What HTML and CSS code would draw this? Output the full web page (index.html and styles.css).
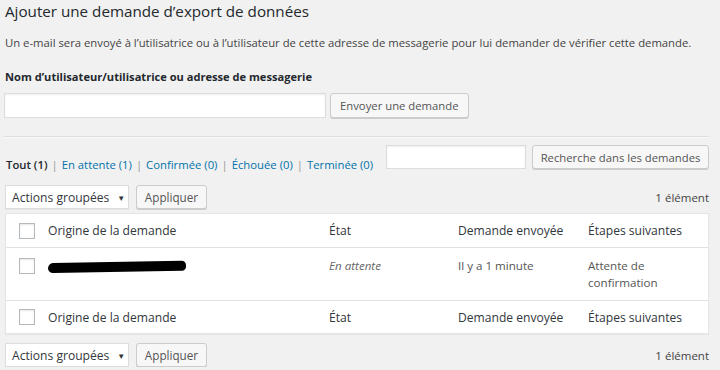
FILE: index.html
```html
<!DOCTYPE html>
<html lang="fr">
<head>
<meta charset="utf-8">
<title>Export</title>
<link rel="stylesheet" href="styles.css">
</head>
<body>
<div class="wrap">
  <h2 class="title">Ajouter une demande d’export de données</h2>
  <p class="intro">Un e-mail sera envoyé à l’utilisatrice ou à l’utilisateur de cette adresse de messagerie pour lui demander de vérifier cette demande.</p>
  <label class="lbl">Nom d’utilisateur/utilisatrice ou adresse de messagerie</label>
  <div class="formrow">
    <input class="txt main" type="text">
    <button class="btn">Envoyer une demande</button>
  </div>
  <hr class="sep">
  <div class="filters">
    <ul class="subsub">
      <li class="current">Tout <span class="count">(1)</span></li>
      <li class="bar">|</li>
      <li><a>En attente <span>(1)</span></a></li>
      <li class="bar">|</li>
      <li><a>Confirmée <span>(0)</span></a></li>
      <li class="bar">|</li>
      <li><a>Échouée <span>(0)</span></a></li>
      <li class="bar">|</li>
      <li><a>Terminée <span>(0)</span></a></li>
    </ul>
    <div class="search">
      <input class="txt srch" type="text">
      <button class="btn">Recherche dans les demandes</button>
    </div>
  </div>
  <div class="tablenav">
    <div class="bulk">
      <div class="select">Actions groupées <span class="arrow">▼</span></div>
      <button class="btn">Appliquer</button>
    </div>
    <div class="num">1 élément</div>
  </div>
  <div class="table">
    <div class="row head">
      <div class="c-cb"><span class="cb"></span></div>
      <div class="c-orig">Origine de la demande</div>
      <div class="c-state">État</div>
      <div class="c-sent">Demande envoyée</div>
      <div class="c-next">Étapes suivantes</div>
    </div>
    <div class="row body">
      <div class="c-cb"><span class="cb"></span></div>
      <div class="c-orig"><span class="redact"></span></div>
      <div class="c-state"><em>En attente</em></div>
      <div class="c-sent">Il y a 1 minute</div>
      <div class="c-next">Attente de<br>confirmation</div>
    </div>
    <div class="row foot">
      <div class="c-cb"><span class="cb"></span></div>
      <div class="c-orig">Origine de la demande</div>
      <div class="c-state">État</div>
      <div class="c-sent">Demande envoyée</div>
      <div class="c-next">Étapes suivantes</div>
    </div>
  </div>
  <div class="tablenav bottom">
    <div class="bulk">
      <div class="select">Actions groupées <span class="arrow">▼</span></div>
      <button class="btn">Appliquer</button>
    </div>
    <div class="num">1 élément</div>
  </div>
</div>
</body>
</html>
```
FILE: styles.css
```css
html, body {
  margin: 0;
  padding: 0;
  background: #f1f1f1;
}
body {
  font-family: "Open Sans", "Noto Sans", sans-serif;
  font-size: 11.3px;
  color: #444;
}
.wrap {
  padding: 0 11px 0 4px;
  display: flex;
  flex-direction: column;
}
.title {
  font-size: 15.2px;
  font-weight: 400;
  color: #23282d;
  margin: 1px 0 0 1px;
  line-height: 20px;
}
.intro {
  margin: 13px 0 0 1px;
  line-height: 18px;
}
.lbl {
  margin: 16px 0 0 1px;
  font-weight: 700;
  font-size: 11.1px;
  color: #23282d;
  line-height: 18px;
}
.formrow {
  display: flex;
  gap: 4px;
  margin-top: 7px;
}
.txt {
  box-sizing: border-box;
  background: #fff;
  border: 1px solid #ddd;
  box-shadow: inset 0 1px 2px rgba(0,0,0,.07);
  height: 25px;
  margin: 0;
  padding: 0;
}
.main { width: 322px; }
.btn {
  box-sizing: border-box;
  font-family: inherit;
  font-size: 11.3px;
  color: #555;
  background: #f7f7f7;
  border: 1px solid #ccc;
  border-radius: 3px;
  box-shadow: 0 1px 0 #ccc;
  height: 25px;
  padding: 0 9px;
  margin: 0;
  white-space: nowrap;
}
.sep {
  border: 0;
  border-top: 1px solid #ddd;
  border-bottom: 1px solid #fafafa;
  margin: 18px 0 0 0;
  height: 0;
}
.filters {
  display: flex;
  align-items: flex-end;
  margin-top: 7px;
}
.subsub {
  list-style: none;
  display: flex;
  flex-shrink: 0;
  white-space: nowrap;
  gap: 3px;
  margin: 0 0 0 2px;
  padding: 0;
  align-items: center;
  font-size: 11.3px;
  line-height: 9px;
}
.subsub li { flex-shrink: 0; }
.subsub a { color: #0073aa; }
.subsub .current { color: #23282d; font-weight: 600; }
.subsub .bar { color: #999; padding: 0 1px; }
.search {
  display: flex;
  gap: 6px;
  margin-left: auto;
  flex-shrink: 0;
}
.srch { width: 140px; height: 24px; }
.search .btn { height: 24px; width: 177px; padding: 0; }
.tablenav {
  display: flex;
  align-items: center;
  justify-content: space-between;
  margin-top: 16px;
}
.bulk { display: flex; gap: 7px; margin-left: 1px; }
.select {
  box-sizing: border-box;
  background: #fff;
  border: 1px solid #ddd;
  box-shadow: 0 1px 1px rgba(0,0,0,.04);
  height: 24px;
  width: 124px;
  display: flex;
  align-items: center;
  padding-left: 6px;
  color: #32373c;
  font-size: 12.1px;
  white-space: nowrap;
}
.select .arrow { font-size: 8px; margin-left: 8px; }
.bulk .btn { height: 24px; width: 71px; padding: 0; font-size: 11.7px; }
.num { color: #444; font-size: 11.5px; }
.table {
  margin: 4px 0 0 1px;
  background: #fff;
  border: 1px solid #e5e5e5;
  box-shadow: 0 1px 1px rgba(0,0,0,.04);
  display: flex;
  flex-direction: column;
}
.row {
  display: grid;
  grid-template-columns: 42px 281px 129px 130px 1fr;
  align-items: start;
}
.row.head { height: 33px; border-bottom: 1px solid #e1e1e1; align-items: center; font-size: 12.1px; color: #32373c; }
.row.body { height: 52px; padding-top: 9px; box-sizing: border-box; line-height: 17px; color: #555; font-size: 11.6px; }
.row.foot { height: 32px; border-top: 1px solid #e1e1e1; align-items: center; font-size: 12.1px; color: #32373c; }
.c-cb { display: flex; padding-left: 13px; }
.cb {
  box-sizing: border-box;
  width: 16px;
  height: 16px;
  border: 1px solid #b4b9be;
  background: #fff;
  box-shadow: inset 0 1px 2px rgba(0,0,0,.1);
}
.row.body .cb { margin-top: 1px; }
.redact {
  display: block;
  width: 138px;
  height: 10px;
  margin-top: 5px;
  background: #000;
  border-radius: 6px 5px 5px 6px;
  transform: rotate(-1deg);
}
.c-state em { color: #666; }
.tablenav.bottom { margin-top: 9px; }
```
